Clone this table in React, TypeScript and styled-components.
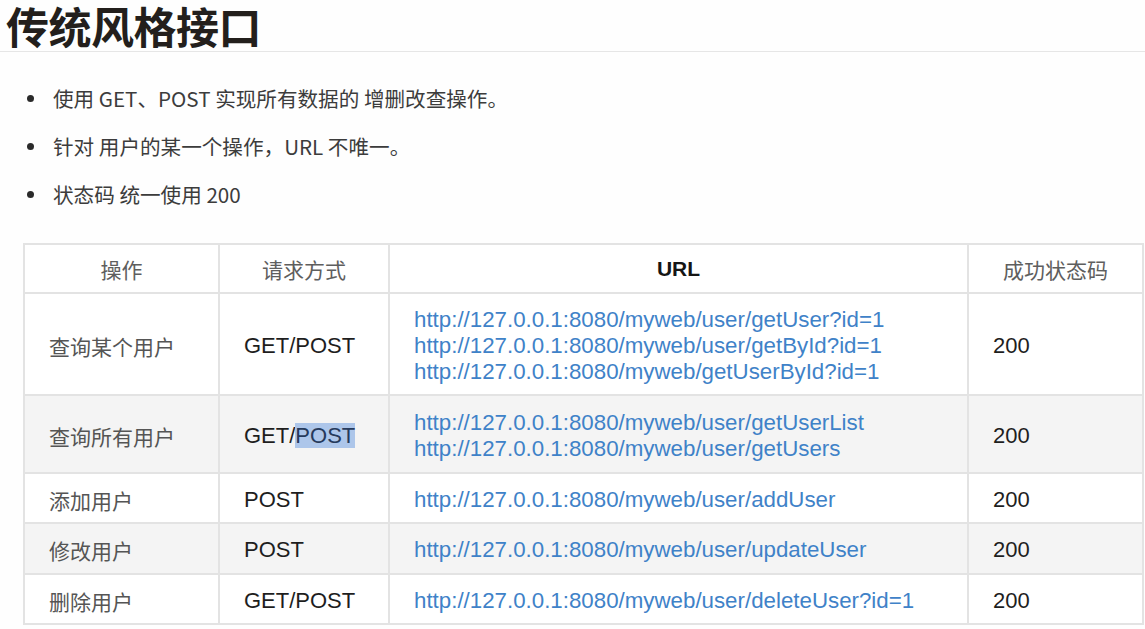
import React from "react";
import styled, { createGlobalStyle } from "styled-components";

const Global = createGlobalStyle`
  html, body { margin: 0; padding: 0; background: #ffffff; }
  body { font-family: "Liberation Sans", "Noto Sans CJK SC", sans-serif; }
`;

const Page = styled.div`
  width: 1145px;
  height: 629px;
  overflow: hidden;
  background: #fefefe;
`;

const Title = styled.h1`
  margin: 0;
  line-height: 51px;
  padding-left: 6px;
  font-family: "Noto Sans CJK SC", sans-serif;
  font-size: 43px;
  font-weight: 700;
  color: #231f1c;
  border-bottom: 1px solid #e6e6e6;
  letter-spacing: -0.5px;
`;

const Bullets = styled.ul`
  list-style: none;
  margin: 22px 0 0 0;
  padding: 0 0 0 27px;
`;

const Bullet = styled.li`
  display: flex;
  align-items: center;
  height: 48px;
  font-family: "Noto Sans CJK SC", sans-serif;
  font-size: 20.6px;
  color: #3c3c3c;
  &::before {
    content: "";
    width: 7px;
    height: 7px;
    border-radius: 50%;
    background: #2a2a2a;
    margin-right: 19px;
    flex-shrink: 0;
  }
`;

const Table = styled.table`
  margin: 25px 0 0 23px;
  width: 1119px;
  border-collapse: collapse;
  table-layout: fixed;
  border: 2px solid #e3e3e3;
`;

const Col = styled.col<{ $w: number }>`
  width: ${(p) => p.$w}px;
`;

const HeadCell = styled.th<{ $latin?: boolean }>`
  height: 47px;
  padding: 0;
  border: 2px solid #e3e3e3;
  text-align: center;
  font-size: 21px;
  font-family: ${(p) =>
    p.$latin ? `"Liberation Sans", sans-serif` : `"Noto Sans CJK SC", serif`};
  font-weight: ${(p) => (p.$latin ? 700 : 400)};
  color: ${(p) => (p.$latin ? "#151515" : "#5e5e5e")};
  background: #ffffff;
`;

const Row = styled.tr<{ $shade: boolean; $h: number }>`
  background: ${(p) => (p.$shade ? "#f4f4f4" : "#ffffff")};
  height: ${(p) => p.$h}px;
`;

const Cell = styled.td<{ $kind: "op" | "method" | "url" | "code" }>`
  border: 2px solid #e3e3e3;
  padding: 3px 0 0 24px;
  vertical-align: middle;
  font-size: ${(p) => (p.$kind === "op" ? "21px" : p.$kind === "url" ? "22.3px" : "22px")};
  line-height: 26px;
  font-family: ${(p) =>
    p.$kind === "op"
      ? `"Noto Sans CJK SC", sans-serif`
      : `"Liberation Sans", "Noto Sans CJK SC", sans-serif`};
  color: ${(p) =>
    p.$kind === "op" ? "#555555" : p.$kind === "url" ? "#3f82c8" : "#1e1e1e"};
`;

const UrlLine = styled.div`
  white-space: nowrap;
`;

const Selected = styled.span`
  background: #adc6ea;
  color: #263a5c;
`;

type RowData = {
  op: string;
  method: React.ReactNode;
  urls: string[];
  h: number;
};

const base = "http://127.0.0.1:8080/myweb/";

const rows: RowData[] = [
  {
    op: "查询某个用户",
    method: "GET/POST",
    urls: [base + "user/getUser?id=1", base + "user/getById?id=1", base + "getUserById?id=1"],
    h: 102,
  },
  {
    op: "查询所有用户",
    method: (
      <>
        GET/<Selected>POST</Selected>
      </>
    ),
    urls: [base + "user/getUserList", base + "user/getUsers"],
    h: 78,
  },
  { op: "添加用户", method: "POST", urls: [base + "user/addUser"], h: 50 },
  { op: "修改用户", method: "POST", urls: [base + "user/updateUser"], h: 51 },
  { op: "删除用户", method: "GET/POST", urls: [base + "user/deleteUser?id=1"], h: 50 },
];

export default function App() {
  return (
    <Page>
      <Global />
      <Title>传统风格接口</Title>
      <Bullets>
        <Bullet>使用 GET、POST 实现所有数据的 增删改查操作。</Bullet>
        <Bullet>针对 用户的某一个操作，URL 不唯一。</Bullet>
        <Bullet>状态码 统一使用 200</Bullet>
      </Bullets>
      <Table>
        <colgroup>
          <Col $w={195} />
          <Col $w={170} />
          <Col $w={579} />
          <Col $w={175} />
        </colgroup>
        <thead>
          <tr>
            <HeadCell>操作</HeadCell>
            <HeadCell>请求方式</HeadCell>
            <HeadCell $latin>URL</HeadCell>
            <HeadCell>成功状态码</HeadCell>
          </tr>
        </thead>
        <tbody>
          {rows.map((r, i) => (
            <Row key={r.op} $shade={i % 2 === 1} $h={r.h}>
              <Cell $kind="op">{r.op}</Cell>
              <Cell $kind="method">{r.method}</Cell>
              <Cell $kind="url">
                {r.urls.map((u) => (
                  <UrlLine key={u}>{u}</UrlLine>
                ))}
              </Cell>
              <Cell $kind="code">200</Cell>
            </Row>
          ))}
        </tbody>
      </Table>
    </Page>
  );
}
